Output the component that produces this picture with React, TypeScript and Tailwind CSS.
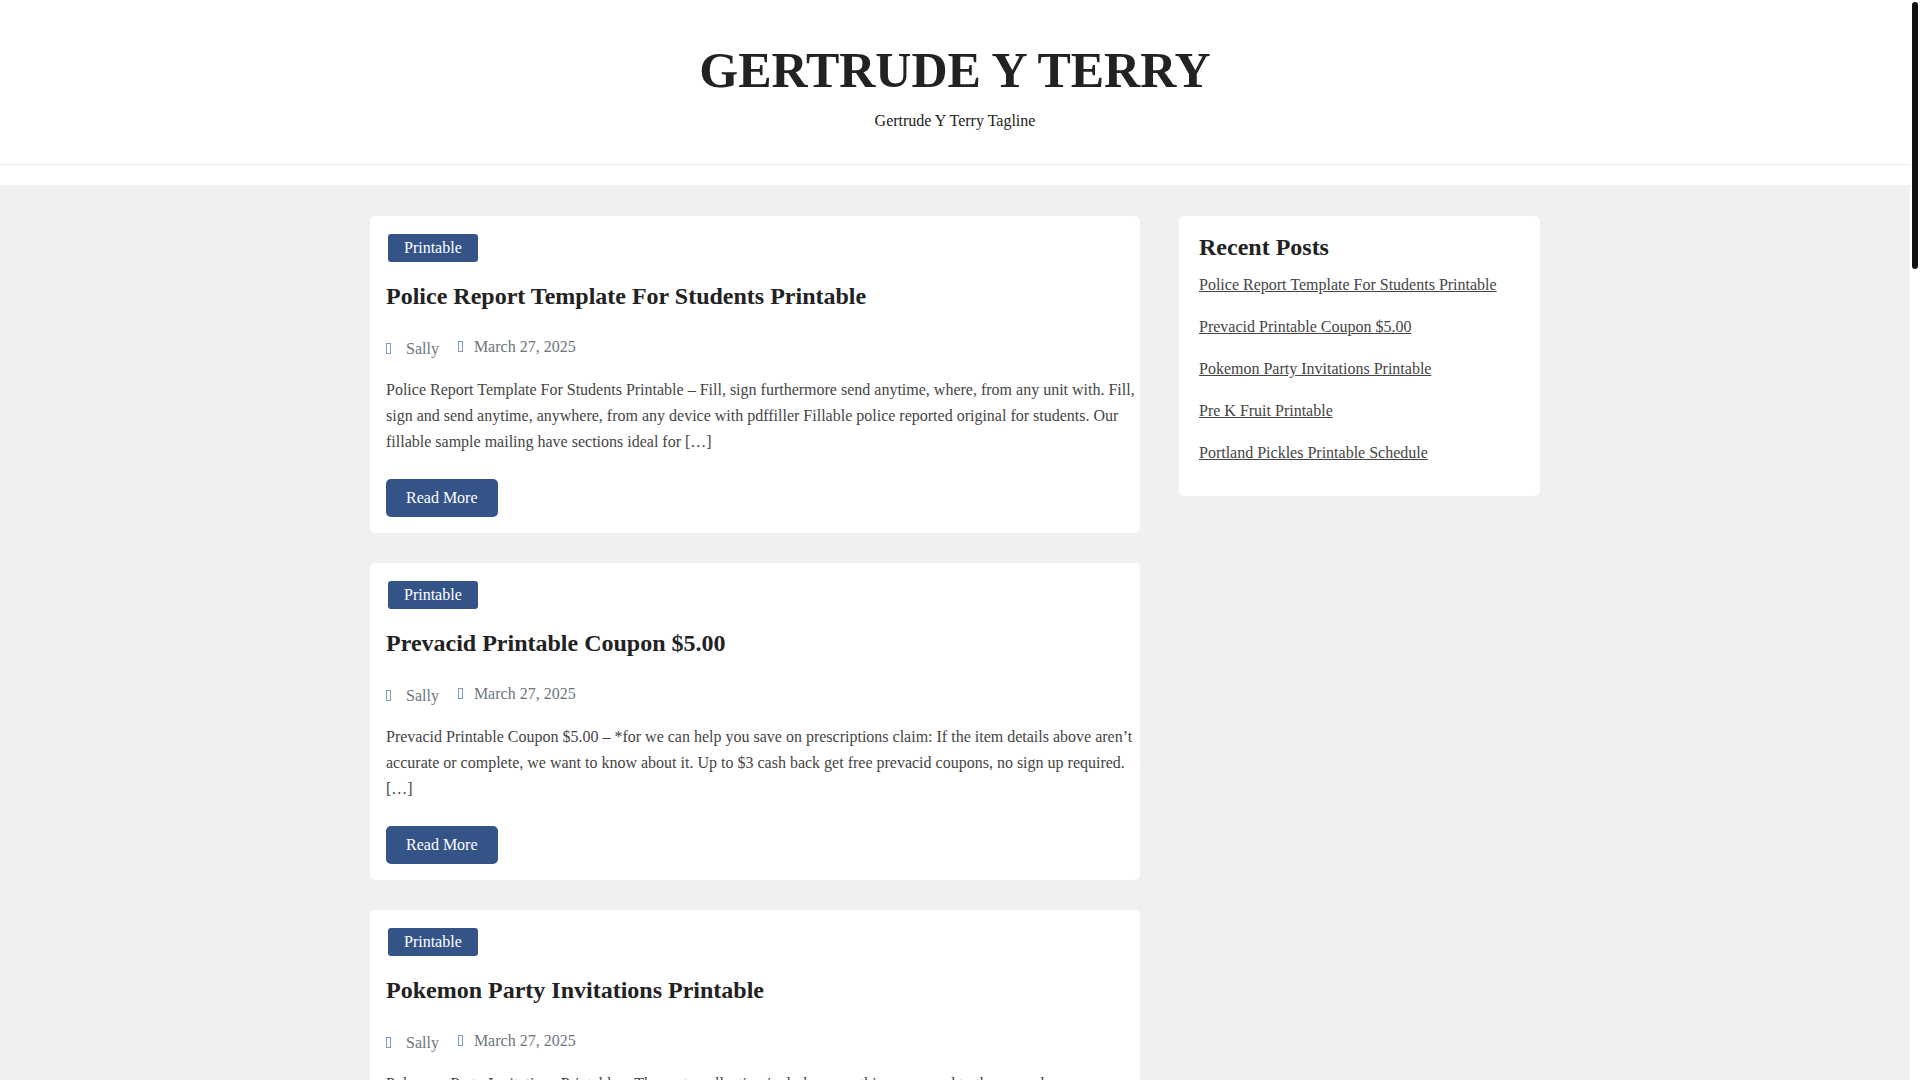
interface Post {
  id: string;
  title: string;
  category: string;
  author: string;
  date: string;
  excerpt: string;
}

const POSTS: Post[] = [
  {
    id: "police-report",
    title: "Police Report Template For Students Printable",
    category: "Printable",
    author: "Sally",
    date: "March 27, 2025",
    excerpt:
      "Police Report Template For Students Printable – Fill, sign furthermore send anytime, where, from any unit with. Fill, sign and send anytime, anywhere, from any device with pdffiller Fillable police reported original for students. Our fillable sample mailing have sections ideal for […]",
  },
  {
    id: "prevacid-coupon",
    title: "Prevacid Printable Coupon $5.00",
    category: "Printable",
    author: "Sally",
    date: "March 27, 2025",
    excerpt:
      "Prevacid Printable Coupon $5.00 – *for we can help you save on prescriptions claim: If the item details above aren’t accurate or complete, we want to know about it. Up to $3 cash back get free prevacid coupons, no sign up required. […]",
  },
  {
    id: "pokemon-party",
    title: "Pokemon Party Invitations Printable",
    category: "Printable",
    author: "Sally",
    date: "March 27, 2025",
    excerpt:
      "Pokemon Party Invitations Printable – The party collection includes everything you need to the ground",
  },
];

const RECENT = [
  "Police Report Template For Students Printable",
  "Prevacid Printable Coupon $5.00",
  "Pokemon Party Invitations Printable",
  "Pre K Fruit Printable",
  "Portland Pickles Printable Schedule",
];

function MetaIcon() {
  return <span className="mb-0.5 h-[11px] w-[5px] border border-[#7f9ac4]" />;
}

function PostCard({ post }: { post: Post }) {
  return (
    <article className="rounded-[5px] bg-white py-4 pl-4 pr-1">
      <div className="px-0.5 pt-0.5">
        <a href="#" className="inline-block rounded-[3px] bg-[#345488] px-4 align-top leading-7 text-white">
          {post.category}
        </a>
      </div>
      <h2 className="mt-4 text-2xl font-bold leading-9">
        <a href="#">{post.title}</a>
      </h2>
      <div className="mt-4 flex h-[38px] gap-[19px] text-[#6c757d]">
        <a href="#" className="flex items-center gap-[15px]">
          <MetaIcon />
          {post.author}
        </a>
        <a href="#" className="flex items-center gap-[11px] pb-1">
          <MetaIcon />
          {post.date}
        </a>
      </div>
      <p className="mt-[9px] leading-[26px] text-[#444]">{post.excerpt}</p>
      <a href="#" className="mt-6 inline-block rounded-[5px] bg-[#345488] px-5 py-[7px] align-top leading-6 text-white">
        Read More
      </a>
    </article>
  );
}

export default function App() {
  return (
    <div className="flex h-screen bg-white font-['Liberation_Serif',serif] text-base text-[#222]">
      <div className="min-w-0 flex-1 overflow-y-auto bg-[#f0f0f0] [scrollbar-width:none]">
        <header className="bg-white pb-5">
          <div className="border-b border-[#eee] pt-10 pb-[31px] text-center">
            <h1 className="text-[50px] font-bold uppercase leading-[60px]">
              <a href="#">Gertrude Y Terry</a>
            </h1>
            <p className="mt-[9px] leading-6">Gertrude Y Terry Tagline</p>
          </div>
        </header>
        <div className="mx-auto flex max-w-[1170px] items-start gap-[39px] py-[31px]">
          <main className="flex min-w-0 flex-1 flex-col gap-[30px]">
            {POSTS.map((post) => (
              <PostCard key={post.id} post={post} />
            ))}
          </main>
          <aside className="w-[361px] rounded-[5px] bg-white px-5 pt-[15px] pb-3.5">
            <h2 className="text-2xl font-bold leading-8">Recent Posts</h2>
            <ul className="mt-[9px]">
              {RECENT.map((title) => (
                <li key={title} className="pb-4 leading-[26px] text-[#444]">
                  <a href="#" className="underline">{title}</a>
                </li>
              ))}
            </ul>
          </aside>
        </div>
      </div>
      {/* scrollbar track */}
      <div className="w-2.5 px-0.5 pt-0.5">
        <div className="h-[267px] rounded-full bg-[#111]" />
      </div>
    </div>
  );
}
